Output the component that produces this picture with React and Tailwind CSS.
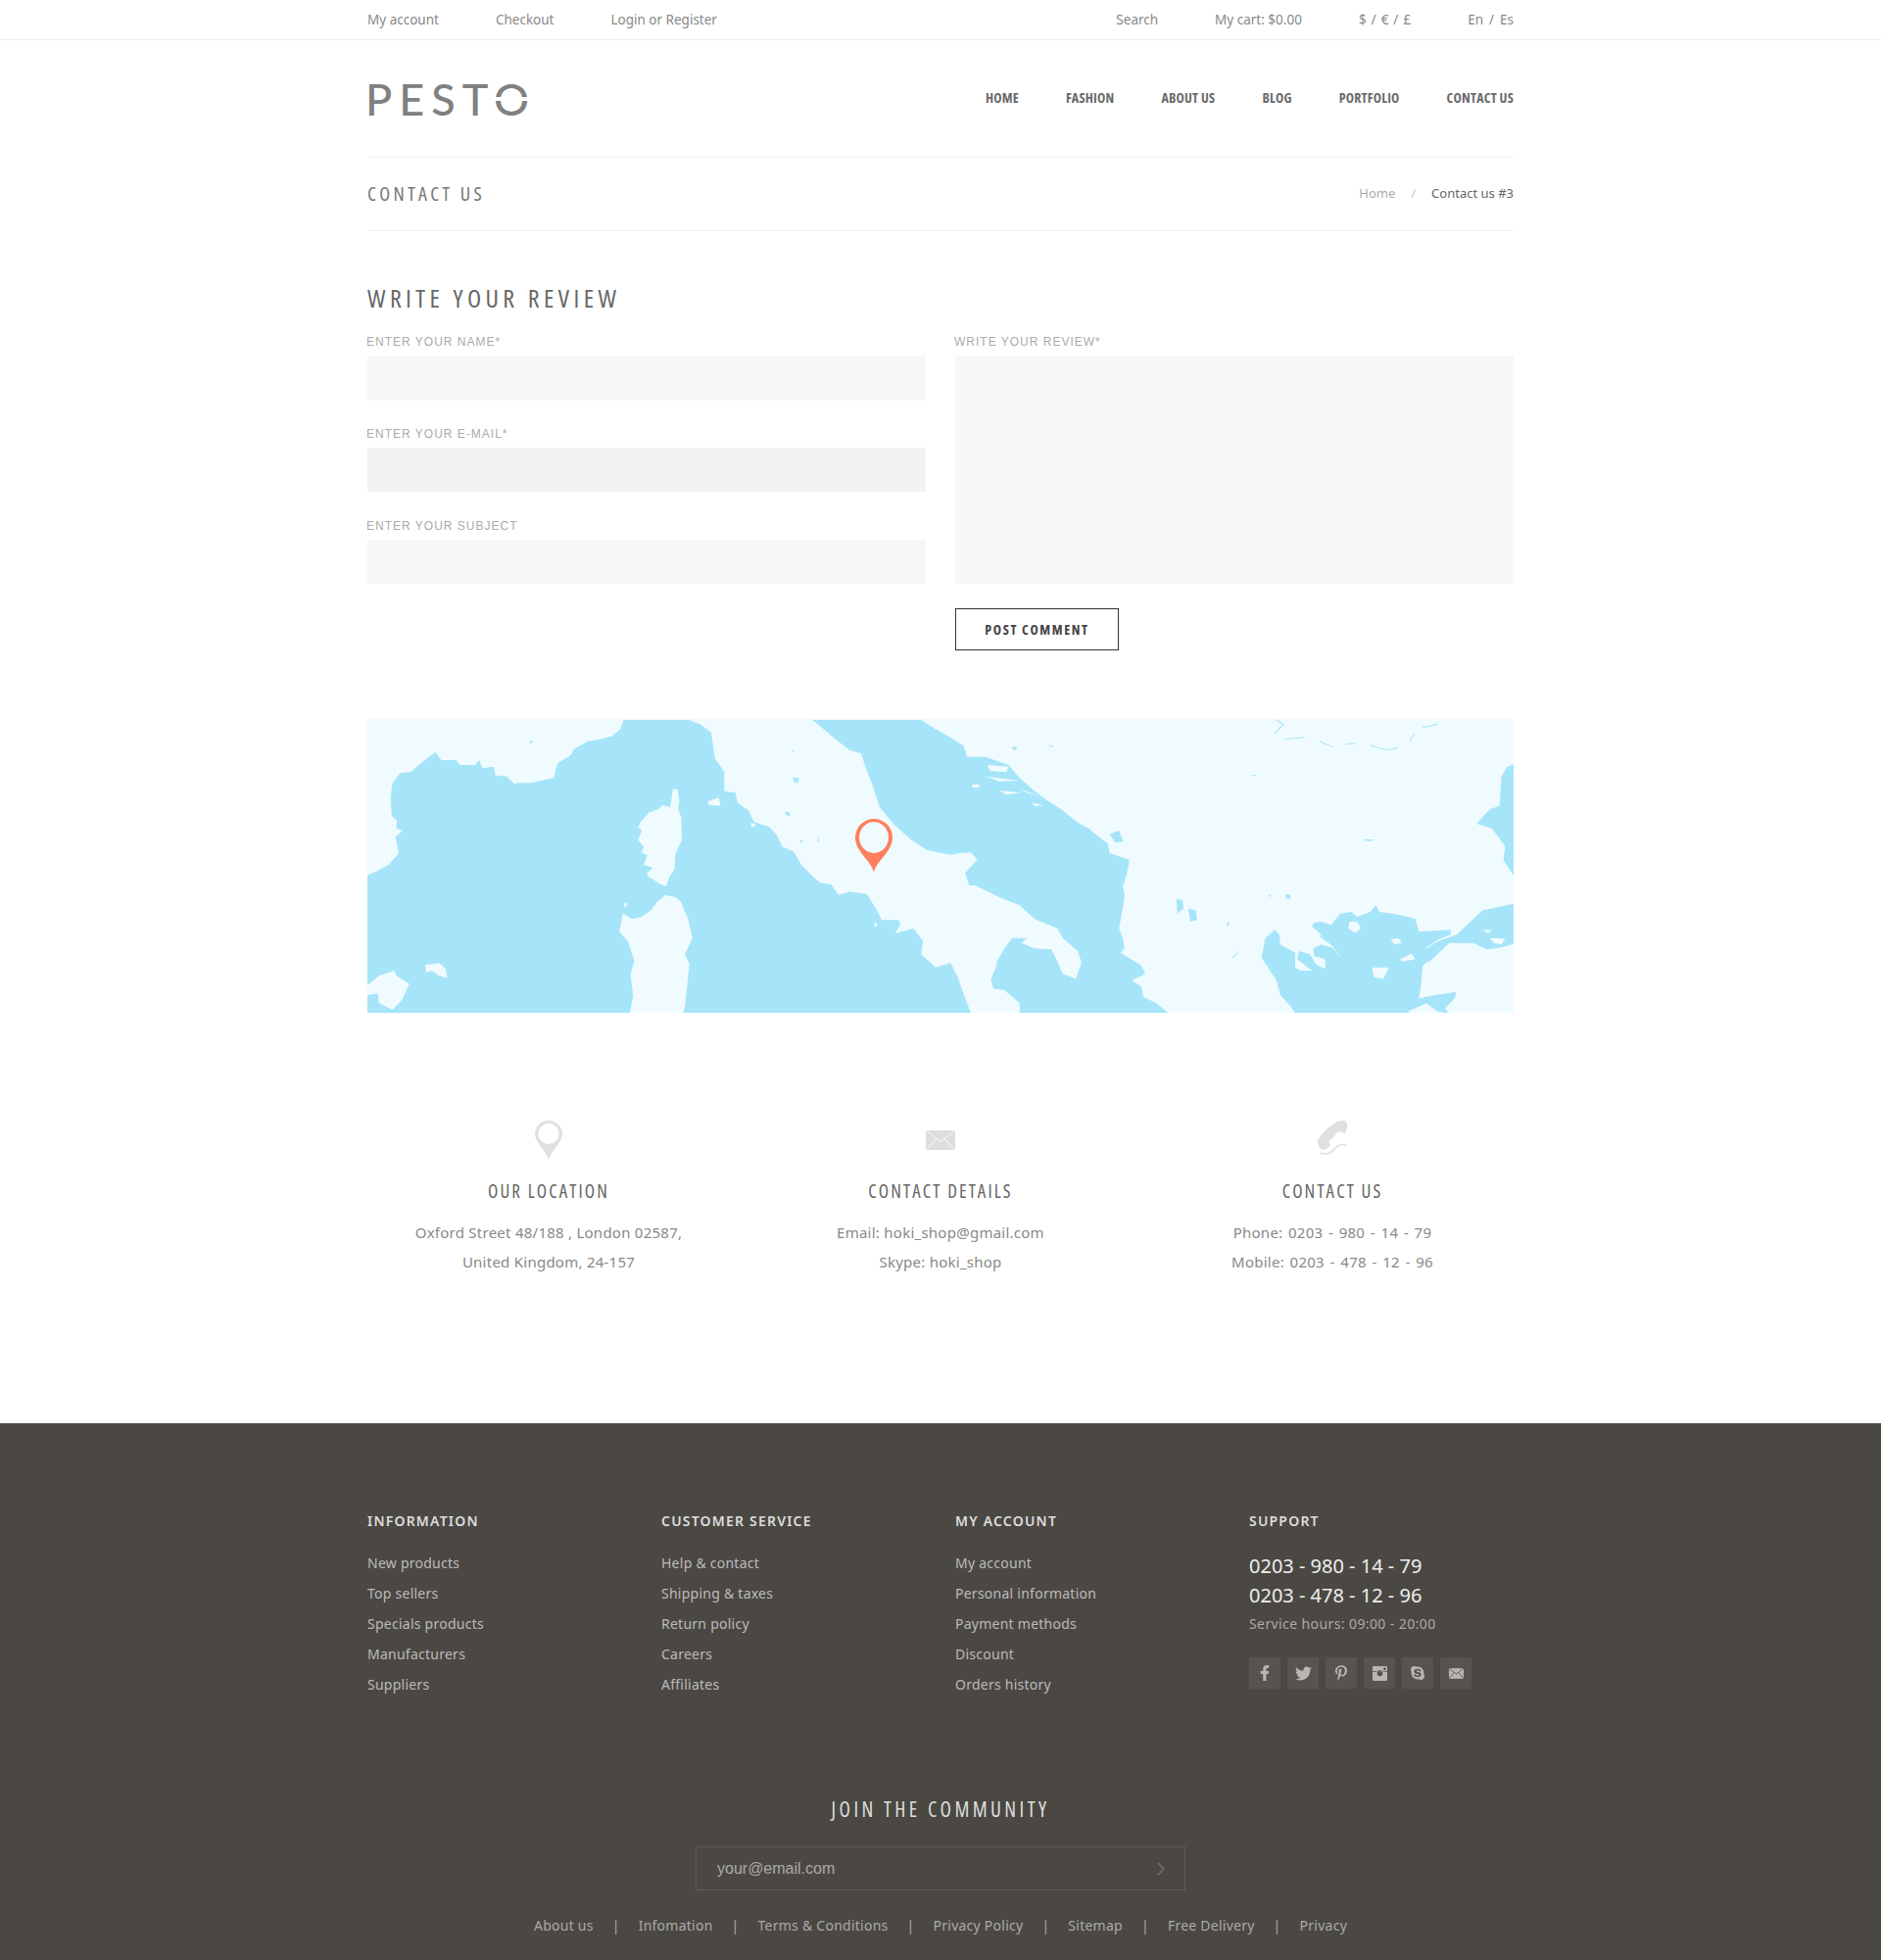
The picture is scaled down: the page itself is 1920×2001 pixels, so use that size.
import React from 'react';
import { FaFacebookF, FaTwitter, FaPinterestP, FaSkype } from 'react-icons/fa';

const body = { fontFamily: '"Noto Sans", sans-serif' };
const narrow = { fontFamily: '"Open Sans", sans-serif', fontStretch: '75%' };

const WATER = '#a6e5f9';
const LAND = '#f0fbff';

// west med + tyrrhenian, traced in crop coords
const westSea = '697,12 688,40 665,62 630,72 600,78 565,100 555,120 520,145 510,190 475,198 450,205 415,205 405,208 385,185 355,182 350,155 320,160 312,135 300,150 260,150 250,135 210,135 195,110 160,140 130,170 100,175 80,205 75,250 78,305 92,320 90,345 107,350 88,370 97,420 70,455 40,475 12,488 12,911 1623,911 1603,850 1588,800 1568,755 1530,770 1490,730 1495,690 1470,650 1420,665 1435,640 1430,625 1385,625 1370,590 1345,545 1300,538 1270,548 1250,515 1220,510 1200,490 1170,455 1150,415 1120,400 1105,365 1085,340 1045,325 1030,290 1000,265 995,235 965,230 965,170 940,130 930,50 900,25 870,12';
const corsica = '828,222 840,225 845,260 842,285 850,310 852,380 835,420 832,470 820,490 810,522 795,515 760,490 760,480 775,465 750,455 760,425 745,420 750,400 735,380 745,350 735,340 745,320 765,295 790,285 800,272 820,280 825,250';
const sardinia = '808,548 835,555 850,570 860,600 868,620 880,680 860,730 872,760 860,890 855,911 712,911 722,860 715,790 725,750 708,690 685,660 695,605 720,622 745,615 770,595 785,570';
const mallorca = '12,825 45,795 85,780 90,795 125,820 105,870 80,900 45,880 40,850 12,855';
const westIslands = [
  '168,762 205,757 222,775 226,803 205,795 185,780 170,785',
  '920,262 950,250 955,275 925,272',
  '698,572 706,572 704,585 698,583',
  '1036,328 1048,330 1046,340 1036,338',
  '1365,635 1372,635 1372,645 1365,645',
];
const westLakes = [
  '1147,188 1165,190 1160,207 1150,200',
  '1127,292 1140,295 1140,308 1128,300',
  '1165,382 1175,382 1172,390',
  '1215,362 1218,385 1214,385',
  '445,80 455,72 452,85',
  '1145,105 1152,105 1150,112',
];
// adriatic + ionian, crop coords of the right half
const eastSea = '-368,12 -338,40 -308,70 -268,105 -238,115 -228,150 -208,210 -188,280 -148,335 -103,380 -63,410 0,425 25,420 55,418 72,440 40,480 50,520 65,518 130,555 185,580 225,622 285,650 300,680 340,720 350,755 335,805 300,790 285,750 270,715 225,712 190,695 205,680 165,680 145,710 125,750 120,775 108,805 115,835 145,840 185,880 185,911 583,911 550,880 515,860 510,830 485,810 520,790 510,765 455,725 465,710 460,680 450,650 460,590 465,550 460,520 470,490 478,440 425,420 420,390 385,360 370,345 345,330 295,285 260,260 220,225 185,190 155,150 95,125 45,125 35,90 0,65 -40,40 -78,12';
const aegean = '920,911 905,885 880,855 870,810 850,775 830,740 840,680 865,655 878,670 880,700 920,725 920,770 935,780 965,780 925,745 930,720 960,730 975,760 1000,775 1000,745 970,735 968,712 990,700 1020,710 1045,745 1020,705 985,675 990,670 965,645 970,632 990,630 1015,640 1040,605 1070,600 1085,615 1120,600 1135,578 1145,600 1180,605 1240,620 1250,660 1335,655 1335,670 1300,685 1268,712 1285,740 1260,765 1255,830 1250,865 1290,855 1350,845 1345,865 1320,895 1328,911 1300,905 1270,880 1220,905 1230,911';
const marmara = '1350,670 1420,595 1503,575 1503,698 1465,710 1430,715 1395,695 1330,695 1290,740 1275,755 1268,715 1300,690';
const blackSea = '1503,148 1485,155 1470,185 1465,275 1440,285 1415,315 1405,330 1445,345 1480,400 1475,440 1503,490';
const eastIslands = [
  '100,150 155,155 150,172 105,168',
  '95,185 185,198 130,200',
  '130,228 190,235 150,240',
  '180,220 245,250 205,235',
  '58,210 78,210 75,220 60,220',
  '218,265 250,275 225,275',
  '1065,630 1085,630 1095,650 1080,665 1062,650',
  '1175,685 1195,680 1205,695 1185,700',
  '1200,745 1230,728 1240,745 1205,752',
  '1125,770 1150,770 1170,770 1155,805 1130,800',
  '1420,655 1445,655 1435,665',
  '1440,680 1480,682 1470,700 1450,695',
  '1460,740 1485,730 1485,745',
];
const eastLakes = [
  '603,560 620,565 622,590 605,605',
  '635,590 655,595 658,625 640,630',
  '165,93 178,95 175,105 167,103',
  '895,545 908,548 906,560 895,558',
  '848,548 856,546 854,556',
  '735,640 745,628 740,645',
  '1100,378 1135,378 1115,384',
  '750,740 775,716 755,742',
  '418,350 425,362 450,350 462,385 440,388',
  '800,180 820,180 810,184',
  '262,90 278,92 268,96',
];
const rivers = ['865,55 888,25 870,12', '890,72 945,65', '985,78 1020,95', '1055,85 1080,85', '1120,90 1165,105 1195,97', '1225,75 1238,55', '1260,35 1300,25'];

function MapPanel() {
  return (
    <svg viewBox="0 0 1170 300" className="block w-[1170px] h-[300px]">
      <rect width="1170" height="300" fill={LAND} />
      <g transform="translate(-5,-3) scale(0.3827,0.3333)">
        <polygon points={westSea} fill={WATER} />
        {[corsica, sardinia, mallorca, ...westIslands].map((p, i) => <polygon key={i} points={p} fill={LAND} />)}
        {westLakes.map((p, i) => <polygon key={i} points={p} fill={WATER} />)}
      </g>
      <g transform="translate(595,-3) scale(0.3827,0.3333)">
        <polygon points={eastSea} fill={WATER} />
        <polygon points={aegean} fill={WATER} />
        <polygon points={marmara} fill={WATER} />
        <polygon points={blackSea} fill={WATER} />
        {eastIslands.map((p, i) => <polygon key={i} points={p} fill={LAND} />)}
        {eastLakes.map((p, i) => <polygon key={i} points={p} fill={WATER} />)}
        {rivers.map((p, i) => <polyline key={i} points={p} fill="none" stroke={WATER} strokeWidth="3" />)}
      </g>
      <path
        fillRule="evenodd"
        fill="#ff7f5c"
        d="M517 157C515 145 498 136 498 121a19 19 0 0 1 38 0C536 136 519 145 517 157ZM517 105a15 16 0 1 0 0.01 0Z"
      />
    </svg>
  );
}

function PinIcon() {
  return (
    <svg width="28" height="41" viewBox="0 0 28 41">
      <path
        fillRule="evenodd"
        fill="#e0e0e0"
        d="M14 41C13 32 0 23 0 13.500a14 13.500 0 0 1 28 0C28 23 15 32 14 41ZM14 3a10.500 10.500 0 1 0 .01 0Z"
      />
    </svg>
  );
}

function MailIcon() {
  return (
    <svg width="30" height="20" viewBox="0 0 30 20">
      <rect width="30" height="20" fill="#dedede" />
      <path d="M0 0l15 12L30 0M0 20l11-11M30 20L19 9" fill="none" stroke="#fff" strokeWidth="0.8" />
    </svg>
  );
}

function PhoneIcon() {
  return (
    <svg width="36" height="40" viewBox="12 8 36 40">
      <path
        fill="#e0e0e0"
        d="M35 9L42 8C45 9 46 13 45 16L43 21L36 19C33 23 30 26 26 29L28 33L24 37L20 38C17 37 15 33 15 29C17 23 27 13 35 9Z"
      />
      <path d="M18 41C25 44 30 40 33 36C36 33 42 31 45 34" fill="none" stroke="#e0e0e0" strokeWidth="1.500" />
    </svg>
  );
}

function InstagramIcon() {
  return (
    <svg width="15" height="15" viewBox="0 0 14 14">
      <path
        fillRule="evenodd"
        fill="#b8b6b1"
        d="M1 0h12a1 1 0 0 1 1 1v12a1 1 0 0 1-1 1H1a1 1 0 0 1-1-1V1a1 1 0 0 1 1-1ZM0 5.500h3.800a3.700 3.700 0 0 1 6.400 0H14V5H0ZM7 4.400a2.700 2.700 0 1 0 .01 0ZM10.500 1.500v2.300h2.200V1.500Z"
      />
    </svg>
  );
}

function EnvelopeSmall() {
  return (
    <svg width="15" height="11" viewBox="0 0 14 10">
      <rect width="14" height="10" fill="#b8b6b1" />
      <path d="M0 0l7 5.500L14 0M0 10l5-6M14 10L9 4" fill="none" stroke="#575450" strokeWidth="0.800" />
    </svg>
  );
}

const socials = [
  <FaFacebookF key="f" size={16} />,
  <FaTwitter key="t" size={17} />,
  <FaPinterestP key="p" size={16} />,
  <InstagramIcon key="i" />,
  <FaSkype key="s" size={16} />,
  <EnvelopeSmall key="m" />,
];

const footerCols = [
  { title: 'INFORMATION', links: ['New products', 'Top sellers', 'Specials products', 'Manufacturers', 'Suppliers'] },
  { title: 'CUSTOMER SERVICE', links: ['Help & contact', 'Shipping & taxes', 'Return policy', 'Careers', 'Affiliates'] },
  { title: 'MY ACCOUNT', links: ['My account', 'Personal information', 'Payment methods', 'Discount', 'Orders history'] },
];

const bottomLinks = ['About us', 'Infomation', 'Terms & Conditions', 'Privacy Policy', 'Sitemap', 'Free Delivery', 'Privacy'];

function Field({ label, inputClass, className }) {
  return (
    <div className={className}>
      <label className="block text-[12px] leading-[14px] tracking-[1px] text-[#aaaaaa] mb-[7px] -ml-px" style={{ fontFamily: '"Liberation Sans", sans-serif' }}>{label}</label>
      <div className={inputClass} />
    </div>
  );
}

function InfoCol({ icon, title, lines, textClass }) {
  return (
    <div className="flex flex-col items-center text-center">
      <div className="h-[40px] flex items-center justify-center">{icon}</div>
      <h4 className="mt-[20px] text-[19px] leading-[24px] tracking-[2.1px] text-[#666666]" style={narrow}>{title}</h4>
      <div className={`mt-[15px] text-[15px] tracking-[0.25px] leading-[30px] text-[#888888] ${textClass || ''}`} style={body}>
        {lines.map((l) => <p key={l}>{l}</p>)}
      </div>
    </div>
  );
}

export default function App() {
  return (
    <div className="w-full bg-white" style={body}>
      {/* top bar */}
      <div className="h-[41px] border-b border-[#eeeeee]">
        <div className="w-[1170px] mx-auto h-[40px] pt-px flex items-center justify-between text-[13.5px] text-[#888888]">
          <div className="flex gap-[58px]">
            <a>My account</a>
            <a>Checkout</a>
            <a>Login or Register</a>
          </div>
          <div className="flex gap-[58px]">
            <a>Search</a>
            <a>My cart: $0.00</a>
            <a className="[word-spacing:1.5px]">$ / € / £</a>
            <a className="[word-spacing:2.5px]">En / Es</a>
          </div>
        </div>
      </div>

      <div className="w-[1170px] mx-auto">
        {/* logo + nav */}
        <div className="h-[120px] border-b border-[#f0f0f0] flex items-center justify-between pb-[2px]">
          <div className="relative -ml-[2px] mt-[3px] text-[45px] leading-[45px] tracking-[7px] font-medium text-[#808080]" style={{ fontFamily: 'Lato, sans-serif' }}>
            PESTO
            <span className="absolute left-[131px] top-[20px] w-[38px] h-[4px] bg-white" />
          </div>
          <nav className="flex gap-[48px] text-[14px] tracking-[0.2px] font-bold text-[#6b6b6b]" style={narrow}>
            {['HOME', 'FASHION', 'ABOUT US', 'BLOG', 'PORTFOLIO', 'CONTACT US'].map((n) => <a key={n}>{n}</a>)}
          </nav>
        </div>

        {/* page title */}
        <div className="h-[75px] border-b border-[#f0f0f0] flex items-center justify-between">
          <h1 className="text-[20px] tracking-[3.4px] text-[#777777]" style={narrow}>CONTACT US</h1>
          <div className="flex items-center text-[13px]">
            <span className="text-[#aaaaaa]">Home</span>
            <span className="text-[#cccccc] mx-[16px]">/</span>
            <span className="text-[#666666]">Contact us #3</span>
          </div>
        </div>

        {/* form */}
        <h2 className="mt-[52px] text-[26px] leading-[32px] tracking-[4.4px] text-[#666666]" style={narrow}>WRITE YOUR REVIEW</h2>
        <div className="mt-[22px] grid grid-cols-2 gap-x-[30px]">
          <div>
            <Field label="ENTER YOUR NAME*" inputClass="h-[46px] bg-[#f7f7f7]" />
            <Field label="ENTER YOUR E-MAIL*" className="mt-[27px]" inputClass="h-[45px] bg-[#f2f2f2]" />
            <Field label="ENTER YOUR SUBJECT" className="mt-[28px]" inputClass="h-[45px] bg-[#f7f7f7]" />
          </div>
          <div>
            <Field label="WRITE YOUR REVIEW*" inputClass="h-[233px] bg-[#f7f7f7]" />
            <button className="mt-[25px] h-[43px] w-[167px] border border-[#333333] text-[14px] font-bold tracking-[1.6px] text-[#444444]" style={narrow}>
              POST COMMENT
            </button>
          </div>
        </div>

        {/* map */}
        <div className="mt-[70px]">
          <MapPanel />
        </div>

        {/* contact info */}
        <div className="mt-[110px] h-[309px] grid grid-cols-3 gap-x-[30px]">
          <InfoCol icon={<PinIcon />} title="OUR LOCATION" lines={['Oxford Street 48/188 , London 02587,', 'United Kingdom, 24-157']} />
          <InfoCol icon={<MailIcon />} title="CONTACT DETAILS" lines={['Email: hoki_shop@gmail.com', 'Skype: hoki_shop']} />
          <InfoCol icon={<PhoneIcon />} title="CONTACT US" textClass="[word-spacing:1.5px]" lines={['Phone: 0203 - 980 - 14 - 79', 'Mobile: 0203 - 478 - 12 - 96']} />
        </div>
      </div>

      {/* footer */}
      <footer className="bg-[#4b4843] h-[548px] pt-[90px]">
        <div className="w-[1170px] mx-auto grid grid-cols-4 gap-x-[30px]">
          {footerCols.map((c) => (
            <div key={c.title}>
              <h5 className="text-[14px] leading-[20px] font-semibold tracking-[1.2px] text-[#dddddd]">{c.title}</h5>
              <ul className="mt-[17px] text-[14px] tracking-[0.25px] leading-[31px] text-[#bbbbbb]">
                {c.links.map((l) => <li key={l}>{l}</li>)}
              </ul>
            </div>
          ))}
          <div>
            <h5 className="text-[14px] leading-[20px] font-semibold tracking-[1.2px] text-[#dddddd]">SUPPORT</h5>
            <div className="mt-[21px] text-[20px] leading-[30px] text-[#eeeeee]">
              <p>0203 - 980 - 14 - 79</p>
              <p>0203 - 478 - 12 - 96</p>
            </div>
            <p className="text-[14px] tracking-[0.4px] leading-[28px] text-[#aaaaaa]">Service hours: 09:00 - 20:00</p>
            <div className="mt-[20px] flex gap-[7px]">
              {socials.map((s, i) => (
                <span key={i} className="w-[32px] h-[32px] bg-[#575450] flex items-center justify-center text-[#b8b6b1]">{s}</span>
              ))}
            </div>
          </div>
        </div>

        <div className="mt-[98px] flex flex-col items-center">
          <h3 className="text-[21px] leading-[28px] tracking-[3.4px] text-[#dddddd]" style={narrow}>JOIN THE COMMUNITY</h3>
          <div className="mt-[24px] w-[500px] h-[45px] border border-[#5f5c57] flex items-center justify-between pl-[21px] pr-[20px]">
            <span className="text-[16px] text-[#aaaaaa]" style={{ fontFamily: '"Liberation Sans", sans-serif' }}>your@email.com</span>
            <svg width="8" height="14" viewBox="0 0 8 14"><path d="M1 1l6 6-6 6" fill="none" stroke="#7c7974" strokeWidth="1.200" /></svg>
          </div>
          <div className="mt-[25px] flex items-center text-[14px] tracking-[0.25px] text-[#aaaaaa]">
            {bottomLinks.map((l, i) => (
              <React.Fragment key={l}>
                {i > 0 && <span className="mx-[19px]">|</span>}
                <a>{l}</a>
              </React.Fragment>
            ))}
          </div>
        </div>
      </footer>
    </div>
  );
}
